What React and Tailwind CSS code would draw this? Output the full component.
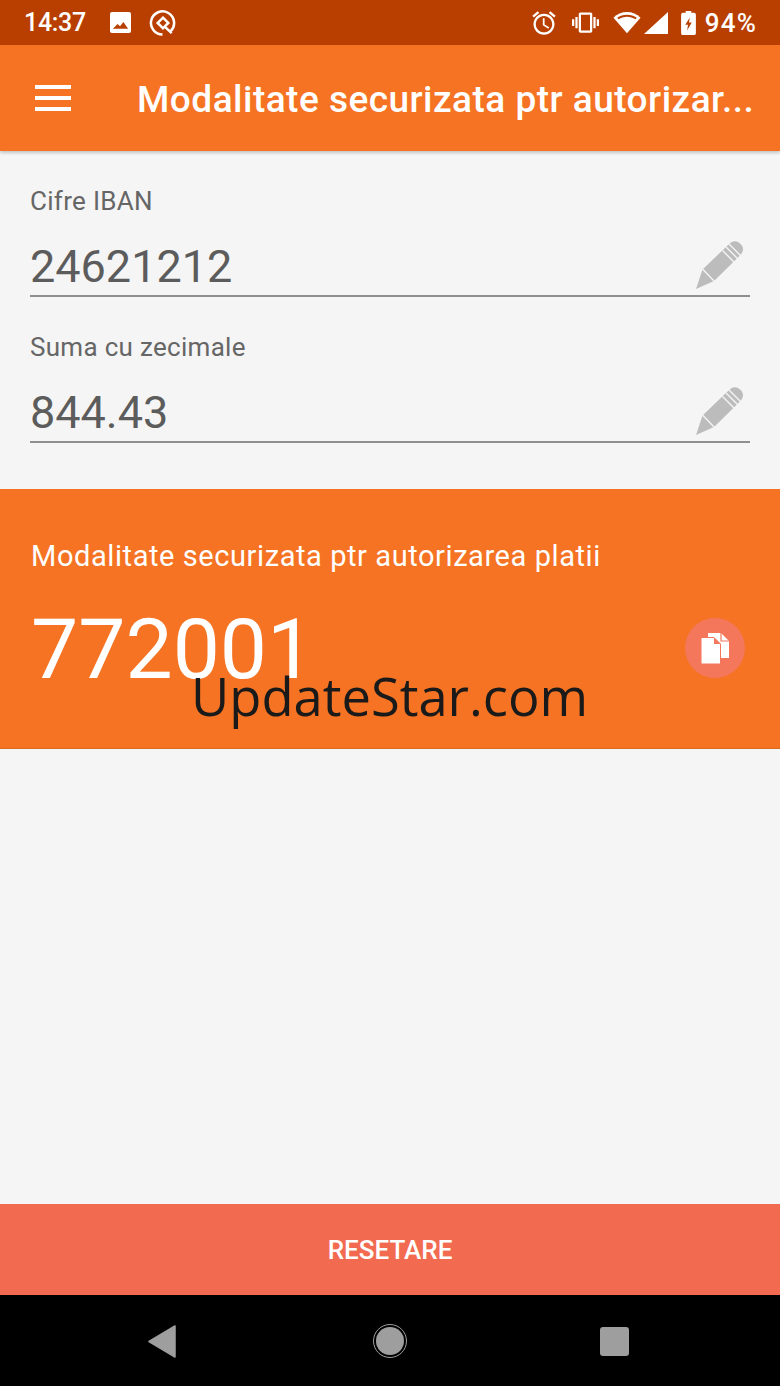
import React from 'react';

const PencilIcon = () => (
  <svg width="48" height="48" viewBox="0 0 48 48" className="shrink-0">
    <path d="M0 48 L6.5 28.5 L31 5 L35 1.5 C38 -0.5 41 -0.3 44 2.5 C47.5 5.5 48 9 45.5 12.5 L42 16.5 L18 40 Z" fill="#bcbcbc" />
    <path d="M6.5 28 L18.5 40.5 M26.5 9.5 L38.5 21.5 M30 6 L42 18 M33 3 L45 15" stroke="#f5f5f5" strokeWidth="1.4" fill="none" />
  </svg>
);

const Field = ({ label, value }) => (
  <div className="flex flex-col">
    <label className="text-[26px] leading-[30px] tracking-[0.3px] text-[#666666]">{label}</label>
    <div className="flex items-end justify-between h-[81px] border-b-2 border-[#8f8f8f] text-[45px] leading-[56px] text-[#5c5c5c]">
      <span>{value}</span>
      <span className="mr-[6px] mb-[6px]"><PencilIcon /></span>
    </div>
  </div>
);

const App = () => {
  return (
    <div className="relative w-[780px] h-[1386px] flex flex-col bg-[#f5f5f5] overflow-hidden font-['Roboto',sans-serif]">
      {/* status bar */}
      <div className="h-[45px] bg-[#b93f00] flex items-center justify-between pl-6 pr-[23px] text-white">
        <div className="flex items-center">
          <span className="text-[25px] font-medium leading-none tracking-[-0.3px]">14:37</span>
          <svg width="21" height="21" viewBox="0 0 22 22" className="ml-[24px]">
            <path d="M2 0 H20 A2 2 0 0 1 22 2 V20 A2 2 0 0 1 20 22 H2 A2 2 0 0 1 0 20 V2 A2 2 0 0 1 2 0 Z M3 17.5 H19 L14 10.5 L10.5 15 L8 12.5 Z" fill="white" fillRule="evenodd" />
          </svg>
          <svg width="27" height="27" viewBox="0 0 28 28" className="ml-[18px]" fill="none" stroke="white" strokeWidth="2.6">
            <path d="M22.5 23 A12 12 0 1 0 14 26.5" />
            <path d="M14.5 9 L20 14.5 L14.5 20 L9 14.5 Z" />
            <path d="M16 18 L23.5 25" />
          </svg>
        </div>
        <div className="flex items-center">
          <svg width="28" height="28" viewBox="0 0 24 24" fill="white">
            <path d="M22 5.72l-4.6-3.86-1.29 1.53 4.6 3.86L22 5.72zM7.88 3.39L6.6 1.86 2 5.71l1.29 1.53 4.59-3.85zM12.5 8H11v6l4.75 2.85.75-1.23-4-2.37V8zM12 4c-4.97 0-9 4.03-9 9s4.03 9 9 9 9-4.03 9-9-4.03-9-9-9zm0 16c-3.87 0-7-3.13-7-7s3.13-7 7-7 7 3.13 7 7-3.13 7-7 7z" />
          </svg>
          <svg width="27" height="27" viewBox="0 0 24 24" fill="white" className="ml-[14px]">
            <path d="M0 15h2V9H0v6zm3 2h2V7H3v10zm19-8v6h2V9h-2zm-3 8h2V7h-2v10zM16.5 3h-9C6.67 3 6 3.67 6 4.5v15c0 .83.67 1.5 1.5 1.5h9c.83 0 1.5-.67 1.5-1.5v-15c0-.83-.67-1.5-1.5-1.5zM16 19H8V5h8v14z" />
          </svg>
          <svg width="28" height="23" viewBox="0 0 30 24" className="ml-[14px]">
            <path d="M15 23.5 L0.5 7 C8 -1.5 22 -1.5 29.5 7 Z" fill="white" />
            <path d="M4.5 7 C10 2.5 20 2.5 25.5 7 L24 8.6 C19 4.8 11 4.8 6 8.6 Z" fill="#b93f00" />
          </svg>
          <svg width="24" height="22" viewBox="0 0 24 22" className="ml-[3px]">
            <path d="M24 0 V22 H0 Z" fill="white" />
          </svg>
          <svg width="15" height="24" viewBox="0 0 16 26" className="ml-[13px]">
            <path d="M5 0 H11 V2 H14 A2 2 0 0 1 16 4 V24 A2 2 0 0 1 14 26 H2 A2 2 0 0 1 0 24 V4 A2 2 0 0 1 2 2 H5 Z" fill="white" />
            <path d="M9.5 7 L4.5 15 H7.5 L6.5 21 L11.5 12.5 H8.5 Z" fill="#b93f00" />
          </svg>
          <span className="ml-[9px] text-[26px] font-medium leading-none tracking-[1.2px]">94%</span>
        </div>
      </div>

      {/* toolbar */}
      <div className="h-[106px] bg-[#f57322] flex items-center shadow-[0_2px_3px_rgba(0,0,0,0.2)] z-10">
        <div className="ml-[35px] w-[36px] flex flex-col gap-[7px]">
          <div className="h-[4px] bg-white" />
          <div className="h-[4px] bg-white" />
          <div className="h-[4px] bg-white" />
        </div>
        <h1 className="ml-[66px] w-[620px] pt-[3px] whitespace-nowrap text-[37px] tracking-[0.48px] font-medium text-white leading-none">
          Modalitate securizata ptr autorizar...
        </h1>
      </div>

      {/* form */}
      <div className="flex flex-col gap-[35px] px-[30px] pt-[35px] h-[338px]">
        <Field label="Cifre IBAN" value="24621212" />
        <Field label="Suma cu zecimale" value="844.43" />
      </div>

      {/* result */}
      <div className="h-[260px] bg-[#f57322] pl-[31px] pr-[35px] pt-[50px] flex flex-col border-b border-[#d96a22]">
        <div className="text-[29px] leading-[34px] tracking-[0.58px] text-white">Modalitate securizata ptr autorizarea platii</div>
        <div className="flex items-center justify-between mt-[27px]">
          <span className="text-[84px] leading-[100px] text-white">772001</span>
          <div className="mt-[-4px] w-[60px] h-[60px] rounded-full bg-[#f4775c] flex items-center justify-center">
            <svg width="28" height="31" viewBox="0 0 28 31">
              <path d="M7 0 H20 L28 8 V25 H7 Z" fill="white" />
              <path d="M20 0 V8 H28" fill="none" stroke="#f4775c" strokeWidth="1.2" />
              <path d="M0 4.5 H13 L19.5 11 V31 H0 Z" fill="white" stroke="#f4775c" strokeWidth="1" />
              <path d="M13 4.5 V11 H19.5 Z" fill="#f4775c" />
            </svg>
          </div>
        </div>
      </div>

      <div className="flex-1" />

      {/* reset */}
      <button className="h-[91px] pt-[2px] bg-[#f26b50] text-white text-[26px] font-medium">RESETARE</button>

      {/* nav bar */}
      <div className="h-[91px] bg-black flex items-center justify-between pl-[148px] pr-[151px]">
        <svg width="28" height="33" viewBox="0 0 28 33" className="mt-[1px]">
          <path d="M27 1 V32 L1 16.5 Z" fill="#9e9e9e" stroke="#9e9e9e" strokeWidth="1.5" strokeLinejoin="round" />
        </svg>
        <div className="ml-[4px] mt-[1px] w-[28px] h-[28px] rounded-full bg-[#9e9e9e] outline-[1.5px] outline-offset-[2px] outline-[#9e9e9e]" />
        <div className="mt-[1px] w-[29px] h-[29px] rounded-[3px] bg-[#9e9e9e]" />
      </div>

      {/* watermark */}
      <div className="absolute left-[191px] top-[658px] text-[52.5px] leading-[76px] text-[#1a1a1a] font-['Open_Sans',sans-serif]">
        UpdateStar.com
      </div>
    </div>
  );
};

export default App;
